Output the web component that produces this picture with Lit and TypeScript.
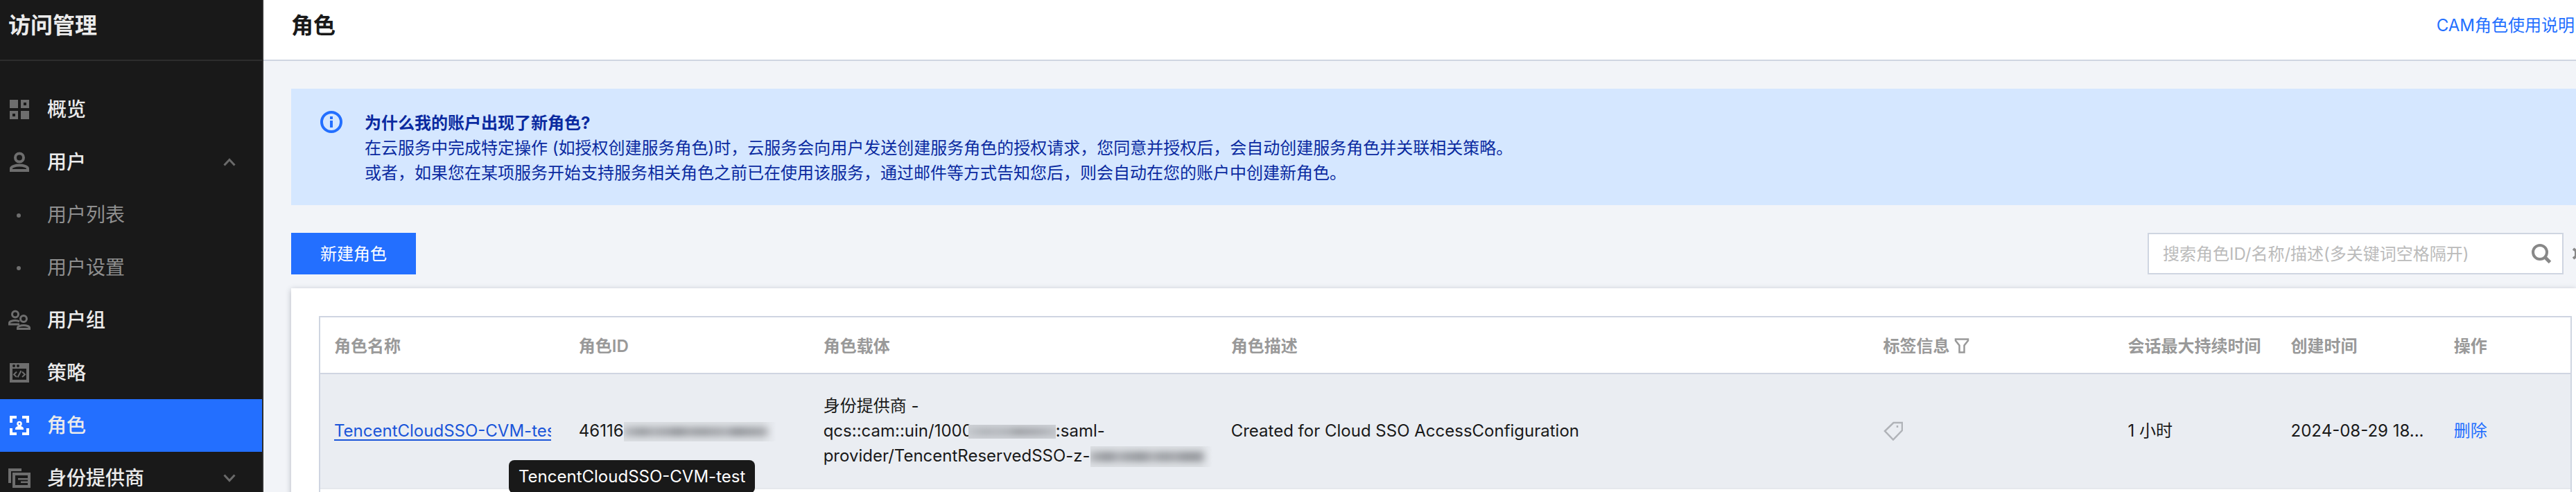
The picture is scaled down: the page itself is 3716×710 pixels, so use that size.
import { LitElement, html, svg, css, nothing } from "lit";
import { customElement, state } from "lit/decorators.js";
import { classMap } from "lit/directives/class-map.js";

type NavItem = { label: string; icon?: string; sub?: boolean; open?: boolean; expandable?: boolean };

const NAV: NavItem[] = [
  { label: "概览", icon: "overview" },
  { label: "用户", icon: "user", expandable: true, open: true },
  { label: "用户列表", sub: true },
  { label: "用户设置", sub: true },
  { label: "用户组", icon: "group" },
  { label: "策略", icon: "policy" },
  { label: "角色", icon: "role" },
  { label: "身份提供商", icon: "provider", expandable: true, open: false },
];

const ICONS: Record<string, unknown> = {
  overview: svg`<path fill="currentColor" fill-rule="evenodd" d="M2 2h12v12H2zM18 2h12v12H18zM22 6v4h4V6zM2 18h12v12H2zM6 22v4h4v-4zM18 18h12v12H18z"/>`,
  user: svg`<g fill="none" stroke="currentColor" stroke-width="4"><circle cx="16" cy="9.5" r="6"/><path d="M4 28v-3c0-2.500 6-4.500 12-4.500s12 2 12 4.500v3z"/></g>`,
  group: svg`<g fill="none" stroke="currentColor" stroke-width="3"><circle cx="10" cy="7.500" r="4.500"/><circle cx="22" cy="14" r="4.500"/><path d="M16 22H1.500V20c0-2 4-3.500 8.500-3.500 2.500 0 4.500 .5 6 1.500"/><path d="M13.500 28.500V27c0-2 4-3.500 8.500-3.500s8.500 1.500 8.500 3.500v1.500z"/></g>`,
  policy: svg`<path fill="currentColor" fill-rule="evenodd" d="M2 2h28v28H2zM6 10v16h20V10z"/><circle cx="8" cy="6" r="2" fill="#191919"/><circle cx="14" cy="6" r="2" fill="#191919"/><path fill="none" stroke="currentColor" stroke-width="2" d="M12 14.500l-4 4 4 3.500M20 14.500l4 4-4 3.500M18.500 13l-5 9.500"/>`,
  role: svg`<path fill="currentColor" d="M2 2h10v4H6v6H2zM20 2h10v10h-4V6h-6zM2 20h4v6h6v4H2zM26 20h4v10H20v-4h6zM10 22v-1.500c0-2 2-3 4-3.500h4c2 .5 4 1.500 4 3.500V22z"/><circle cx="16" cy="13.500" r="2.500" fill="none" stroke="currentColor" stroke-width="2.500"/>`,
  provider: svg`<path fill="currentColor" fill-rule="evenodd" d="M0 2h19v4H4v17H0zM6 8h26v22H6zM10 12v14h18V12z"/><path fill="currentColor" d="M14 16h14v2.500H14zM18 20.500h10v2.500H18z"/>`,
};

@customElement("cam-sidebar")
export class CamSidebar extends LitElement {
  @state() private active = "角色";

  static styles = css`
    :host { display: flex; flex-direction: column; color: #ebebeb; background: #191919; border-right: 2px solid #2d2d2d; box-sizing: border-box; }
    .head { border-bottom: 2px solid #2d2d2d; }
    .title { height: 86px; padding: 14px 12px; box-sizing: border-box; margin: 0; font-size: 32px; line-height: 46px; font-weight: 700; }
    .menu { list-style: none; margin: 0; padding: 32px 0 0; }
    .item { display: flex; align-items: center; gap: 24px; height: 76px; padding: 0 38px 0 12px; color: inherit; text-decoration: none; font-size: 28px; line-height: 40px; font-weight: 500; }
    .icon { width: 32px; height: 32px; flex: none; color: #6e6e6e; }
    .label { flex: 1; }
    .sub { color: #8f8f8f; font-weight: 400; }
    .active { background: #236fff; }
    .active .icon { color: #fff; }
    .chevron { width: 18px; height: 12px; color: #6a6a6a; }
  `;

  render() {
    return html`
      <div class="head"><h2 class="title">访问管理</h2></div>
      <nav aria-label="访问管理">
        <ul class="menu">
          ${NAV.map((n) => html`<li>
            <a href="#" class=${classMap({ item: true, sub: !!n.sub, active: n.label === this.active })}
              @click=${(e: Event) => { e.preventDefault(); this.active = n.label; }}>
              <svg class="icon" viewBox="0 0 32 32" aria-hidden="true">
                ${n.icon ? ICONS[n.icon] : svg`<circle cx="15" cy="17" r="3" fill="currentColor"/>`}
              </svg>
              <span class="label">${n.label}</span>
              ${n.expandable
                ? html`<svg class="chevron" viewBox="0 0 18 12" fill="none" stroke="currentColor" stroke-width="3">
                    <path d=${n.open ? "M1.500 10.500L9 2.500l7.500 8" : "M1.500 1.500L9 9.500l7.500-8"} /></svg>`
                : nothing}
            </a></li>`)}
        </ul>
      </nav>`;
  }
}

@customElement("cam-role-table")
export class CamRoleTable extends LitElement {
  static styles = css`
    :host { display: block; }
    .table { width: 100%; table-layout: fixed; border-collapse: separate; border-spacing: 0; border: 2px solid #cfd5e1; border-bottom: 0; font-size: 24px; line-height: 36px; box-sizing: border-box; }
    th { height: 82px; padding: 4px 20px 0; box-sizing: border-box; text-align: left; font-weight: 600; color: #999; border-bottom: 2px solid #cfd5e1; white-space: nowrap; }
    td { height: 166px; padding: 28px 20px; box-sizing: border-box; vertical-align: middle; background: #eaedf2; border-bottom: 2px solid #e5e8ed; color: #191919; }
    .next td { height: 80px; background: #fff; }
    .c-name, .c-id, .c-tag { width: 10.870%; }
    .c-carrier { width: 18.116%; }
    .c-desc { width: 28.986%; }
    .c-time { width: 7.246%; }
    .filter { width: 22px; height: 24px; vertical-align: -3px; margin-left: 6px; }
    .namecell { position: relative; }
    .name { display: block; overflow: hidden; white-space: nowrap; color: #1a55d9; text-decoration: underline; text-decoration-thickness: 2px; text-underline-offset: 4px; }
    .tip { position: absolute; left: 272px; top: 124px; z-index: 2; padding: 6px 14px; background: #191919; color: #fff; border-radius: 8px; white-space: nowrap; }
    .line { display: block; height: 36px; white-space: nowrap; }
    .nowrap { white-space: nowrap; }
    .mask { display: inline-block; overflow: hidden; vertical-align: middle; background: linear-gradient(90deg, #dcdfe3 90%, #eaedf2); }
    .mask svg { display: block; }
    .mask-id { width: 220px; height: 28px; }
    .mask-uin { width: 126px; height: 20px; margin-left: -6px; background: #ced1d6; }
    .mask-provider { width: 176px; height: 30px; }
    .tag { display: block; width: 28px; height: 28px; }
    .del { color: #236fff; text-decoration: none; }
  `;

  private smudge(w: number, h: number, seeds: number[]) {
    const step = (w - 14) / seeds.length;
    return html`<svg width=${w} height=${h} viewBox="0 0 ${w} ${h}" aria-hidden="true">
      <defs><filter id="soft" x="-20%" y="-60%" width="140%" height="220%"><feGaussianBlur stdDeviation="6 4" /></filter></defs>
      <g filter="url(#soft)">${seeds.map((s, i) => svg`<rect x=${i * step} y=${h * 0.25} width=${step + 1} height=${h * 0.5} fill="#85888d" opacity=${s / 12} />`)}</g>
    </svg>`;
  }

  render() {
    return html`<table class="table">
      <thead><tr>
        <th class="c-name">角色名称</th><th class="c-id">角色ID</th><th class="c-carrier">角色载体</th><th class="c-desc">角色描述</th>
        <th class="c-tag">标签信息<svg class="filter" viewBox="0 0 22 24" fill="none" stroke="currentColor" stroke-width="2.500" aria-hidden="true"><path d="M2 2.500h18v2l-5.500 7v10h-7v-10L2 4.500z"/></svg></th>
        <th class="c-time">会话最大持续时间</th><th class="c-time">创建时间</th><th>操作</th>
      </tr></thead>
      <tbody>
        <tr>
          <td class="namecell"><a class="name" href="#">TencentCloudSSO-CVM-test</a><span class="tip" role="tooltip">TencentCloudSSO-CVM-test</span></td>
          <td class="nowrap">46116<span class="mask mask-id">${this.smudge(220, 28, [6, 8, 6, 7, 9, 7, 8, 7, 6, 9, 8, 7])}</span></td>
          <td>
            <span class="line">身份提供商 -</span>
            <span class="line">qcs::cam::uin/1000<span class="mask mask-uin">${this.smudge(140, 20, [3, 5, 4, 5, 8, 7, 6, 4])}</span>:saml-</span>
            <span class="line">provider/TencentReservedSSO-z-<span class="mask mask-provider">${this.smudge(176, 30, [7, 9, 6, 8, 9, 6, 8, 7, 9, 9])}</span></span>
          </td>
          <td>Created for Cloud SSO AccessConfiguration</td>
          <td><svg class="tag" viewBox="0 0 28 28" fill="none" stroke="#b0b3b8" stroke-width="2.500" role="img" aria-label="标签"><path d="M14.500 2H27v11L14 26.500 2 14z"/><path d="M20 6v3"/></svg></td>
          <td>1 小时</td>
          <td class="nowrap">2024-08-29 18...</td>
          <td><a class="del" href="#">删除</a></td>
        </tr>
        <tr class="next"><td colspan="8"></td></tr>
      </tbody>
    </table>`;
  }
}

@customElement("app-root")
export class AppRoot extends LitElement {
  static styles = css`
    :host { display: grid; grid-template-columns: 380px minmax(0, 1fr); height: 100vh; overflow: hidden; background: #f2f4f8; font-family: Inter, "Noto Sans CJK SC", sans-serif; color: #191919; }
    .main { display: flex; flex-direction: column; min-width: 0; }
    .top { display: flex; align-items: center; justify-content: space-between; height: 88px; flex: none; box-sizing: border-box; padding: 0 2px 12px 40px; background: #fff; border-bottom: 2px solid #cfd5e1; }
    .heading { margin: 0; font-size: 32px; line-height: 46px; font-weight: 700; }
    .help { font-size: 24px; line-height: 36px; color: #236fff; text-decoration: none; }
    .content { display: flex; flex-direction: column; padding: 40px 0 0 40px; }
    .alert { display: flex; gap: 32px; padding: 32px 40px 28px 42px; background: #d5e7ff; color: #0a2aa0; font-size: 24px; line-height: 36px; }
    .alert p { margin: 0; }
    .alert strong { font-weight: 700; }
    .info { width: 32px; height: 32px; flex: none; color: #236fff; }
    .bar { display: flex; align-items: center; justify-content: space-between; margin: 40px 0 20px; }
    .create { width: 180px; height: 60px; border: 0; padding: 2px 0 0; background: #236fff; color: #fff; font: inherit; font-size: 24px; line-height: 36px; cursor: pointer; }
    .tools { display: flex; align-items: center; gap: 12px; overflow: hidden; }
    .search { display: flex; align-items: center; width: 600px; height: 60px; box-sizing: border-box; border: 2px solid #cfd5e1; background: #fff; padding: 0 14px 0 20px; }
    .field { flex: 1; min-width: 0; border: 0; outline: 0; padding: 2px 0 0; background: none; font: inherit; font-size: 24px; line-height: 36px; color: #191919; }
    .field::placeholder { color: #bbb; opacity: 1; }
    .iconbtn { border: 0; background: none; padding: 0; display: flex; color: #888; }
    .glass { width: 32px; height: 32px; }
    .gearbtn { width: 6px; overflow: hidden; }
    .gear { width: 32px; height: 32px; flex: none; }
    .card { background: #fff; padding: 40px 6px 0 40px; box-shadow: 0 2px 8px rgba(54, 58, 80, 0.32); }
  `;

  render() {
    return html`
      <cam-sidebar></cam-sidebar>
      <main class="main">
        <header class="top"><h1 class="heading">角色</h1><a class="help" href="#">CAM角色使用说明</a></header>
        <div class="content">
          <section class="alert">
            <svg class="info" viewBox="0 0 32 32" aria-hidden="true"><circle cx="16" cy="16" r="14" fill="none" stroke="currentColor" stroke-width="4"/><path fill="currentColor" d="M14 8h4v4h-4zM14 14h4v10h-4z"/></svg>
            <div>
              <p><strong>为什么我的账户出现了新角色?</strong></p>
              <p>在云服务中完成特定操作 (如授权创建服务角色)时，云服务会向用户发送创建服务角色的授权请求，您同意并授权后，会自动创建服务角色并关联相关策略。</p>
              <p>或者，如果您在某项服务开始支持服务相关角色之前已在使用该服务，通过邮件等方式告知您后，则会自动在您的账户中创建新角色。</p>
            </div>
          </section>
          <div class="bar">
            <button class="create" type="button">新建角色</button>
            <div class="tools">
              <div class="search">
                <input class="field" type="text" aria-label="搜索角色" placeholder="搜索角色ID/名称/描述(多关键词空格隔开)" />
                <button class="iconbtn" type="button" aria-label="搜索"><svg class="glass" viewBox="0 0 32 32" fill="none" stroke="currentColor" stroke-width="4"><circle cx="14" cy="14" r="10"/><path stroke-width="5" d="M20.500 20.500L28.500 28.500"/></svg></button>
              </div>
              <button class="iconbtn gearbtn" type="button" aria-label="设置"><svg class="gear" viewBox="0 0 32 32" fill="none" stroke="currentColor" stroke-width="4"><path d="M2 9l4 3v8l-4 3M30 9l-4 3v8l4 3M8 8h16M8 24h16"/></svg></button>
            </div>
          </div>
          <section class="card"><cam-role-table></cam-role-table></section>
        </div>
      </main>`;
  }
}
